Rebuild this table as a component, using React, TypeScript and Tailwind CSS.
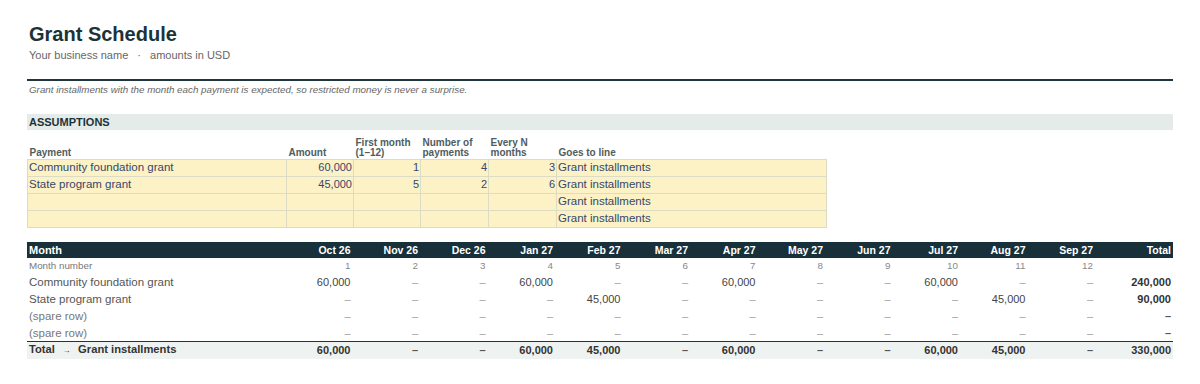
import React from "react";

const months = ["Oct 26","Nov 26","Dec 26","Jan 27","Feb 27","Mar 27","Apr 27","May 27","Jun 27","Jul 27","Aug 27","Sep 27"];

type Row = { label: string; vals: (string | null)[]; total: string | null };
const rows: Row[] = [
  { label: "Community foundation grant", vals: ["60,000",null,null,"60,000",null,null,"60,000",null,null,"60,000",null,null], total: "240,000" },
  { label: "State program grant", vals: [null,null,null,null,"45,000",null,null,null,null,null,"45,000",null], total: "90,000" },
  { label: "(spare row)", vals: Array(12).fill(null), total: null },
  { label: "(spare row)", vals: Array(12).fill(null), total: null },
];
const totals = ["60,000",null,null,"60,000","45,000",null,"60,000",null,null,"60,000","45,000",null];

const assump = [
  { p: "Community foundation grant", a: "60,000", f: "1", n: "4", e: "3" },
  { p: "State program grant", a: "45,000", f: "5", n: "2", e: "6" },
  { p: "", a: "", f: "", n: "", e: "" },
  { p: "", a: "", f: "", n: "", e: "" },
];

const Dash = ({ bold }: { bold?: boolean }) => (
  <span className={bold ? "text-[#555]" : "text-[#a0a0a0]"}>–</span>
);

export default function App() {
  const cell = "border border-[#dcdcc4] bg-[#fdf1c6] px-[1px] h-[17px] leading-[15px] text-[#34486b]";
  return (
    <div className="w-[1200px] h-[384px] bg-white px-[27px] pt-[23px] text-[#333]" style={{ fontFamily: '"Liberation Sans", Arial, sans-serif' }}>
      <div className="pl-[2px] text-[20px] font-bold leading-[23px] text-[#1b3338]">Grant Schedule</div>
      <div className="mt-[2px] pl-[2px] text-[11px] leading-[14px] text-[#666]">
        Your business name <span className="mx-[6px]">·</span> amounts in USD
      </div>
      <div className="mt-[17px] h-[2px] bg-[#1f363c]" />
      <div className="mt-[3px] pl-[2px] text-[9.8px] italic leading-[12px] text-[#666]">
        Grant installments with the month each payment is expected, so restricted money is never a surprise.
      </div>

      <div className="mt-[18px] h-[16px] bg-[#e5ebe8] px-[2px] text-[11px] font-bold leading-[16px] text-[#1b3338]">ASSUMPTIONS</div>

      <table className="table-fixed border-collapse text-[11px]" style={{ width: 799 }}>
        <colgroup>
          <col style={{ width: 259 }} />
          <col style={{ width: 67 }} />
          <col style={{ width: 67 }} />
          <col style={{ width: 68 }} />
          <col style={{ width: 68 }} />
          <col style={{ width: 270 }} />
        </colgroup>
        <thead>
          <tr className="h-[29px] align-bottom text-[10px] font-bold leading-[10px] text-[#4f5d5e]">
            <th className="px-[2px] pb-[1px] text-left">Payment</th>
            <th className="px-[2px] pb-[1px] text-left">Amount</th>
            <th className="px-[2px] pb-[1px] text-left">First month<br />(1–12)</th>
            <th className="px-[2px] pb-[1px] text-left">Number of<br />payments</th>
            <th className="px-[2px] pb-[1px] text-left">Every N<br />months</th>
            <th className="px-[2px] pb-[1px] text-left">Goes to line</th>
          </tr>
        </thead>
        <tbody>
          {assump.map((r, i) => (
            <tr key={i}>
              <td className={cell + " text-[11.5px]"}>{r.p}</td>
              <td className={cell + " text-right"}>{r.a}</td>
              <td className={cell + " text-right"}>{r.f}</td>
              <td className={cell + " text-right"}>{r.n}</td>
              <td className={cell + " text-right"}>{r.e}</td>
              <td className={cell + " text-[11.5px]"}>Grant installments</td>
            </tr>
          ))}
        </tbody>
      </table>

      <table className="mt-[14px] w-[1146px] table-fixed border-collapse text-[11px] leading-[14px]">
        <colgroup>
          <col style={{ width: 258 }} />
          {months.map((m) => (
            <col key={m} style={{ width: 67.5 }} />
          ))}
          <col style={{ width: 78 }} />
        </colgroup>
        <thead>
          <tr className="h-[16px] bg-[#17303a] text-[10.5px] font-bold leading-[16px] text-white">
            <th className="px-[2px] text-left text-[11px]">Month</th>
            {months.map((m) => (
              <th key={m} className="px-[2px] text-right">{m}</th>
            ))}
            <th className="px-[2px] text-right">Total</th>
          </tr>
        </thead>
        <tbody>
          <tr className="h-[16px] text-[9.8px] text-[#777]">
            <td className="px-[2px]">Month number</td>
            {months.map((m, i) => (
              <td key={m} className="px-[2px] text-right text-[#888]">{i + 1}</td>
            ))}
            <td />
          </tr>
          {rows.map((r, i) => (
            <tr key={i} className="h-[17px] text-[#444]">
              <td className={"px-[2px] text-[11.5px] " + (r.label.startsWith("(") ? "text-[#777]" : "text-[#555]")}>{r.label}</td>
              {r.vals.map((v, j) => (
                <td key={j} className="px-[2px] text-right">{v ?? <Dash />}</td>
              ))}
              <td className="px-[2px] text-right font-bold text-[#333]">{r.total ?? <Dash bold />}</td>
            </tr>
          ))}
          <tr className="h-[17px] border-t border-[#1f363c] bg-[#eef2f0] font-bold text-[#333]">
            <td className="px-[2px] text-[11.2px]">
              Total <span className="mx-[4.5px] text-[8px] font-normal">→</span> Grant installments
            </td>
            {totals.map((v, j) => (
              <td key={j} className="px-[2px] text-right">{v ?? <Dash bold />}</td>
            ))}
            <td className="px-[2px] text-right">330,000</td>
          </tr>
        </tbody>
      </table>
    </div>
  );
}
